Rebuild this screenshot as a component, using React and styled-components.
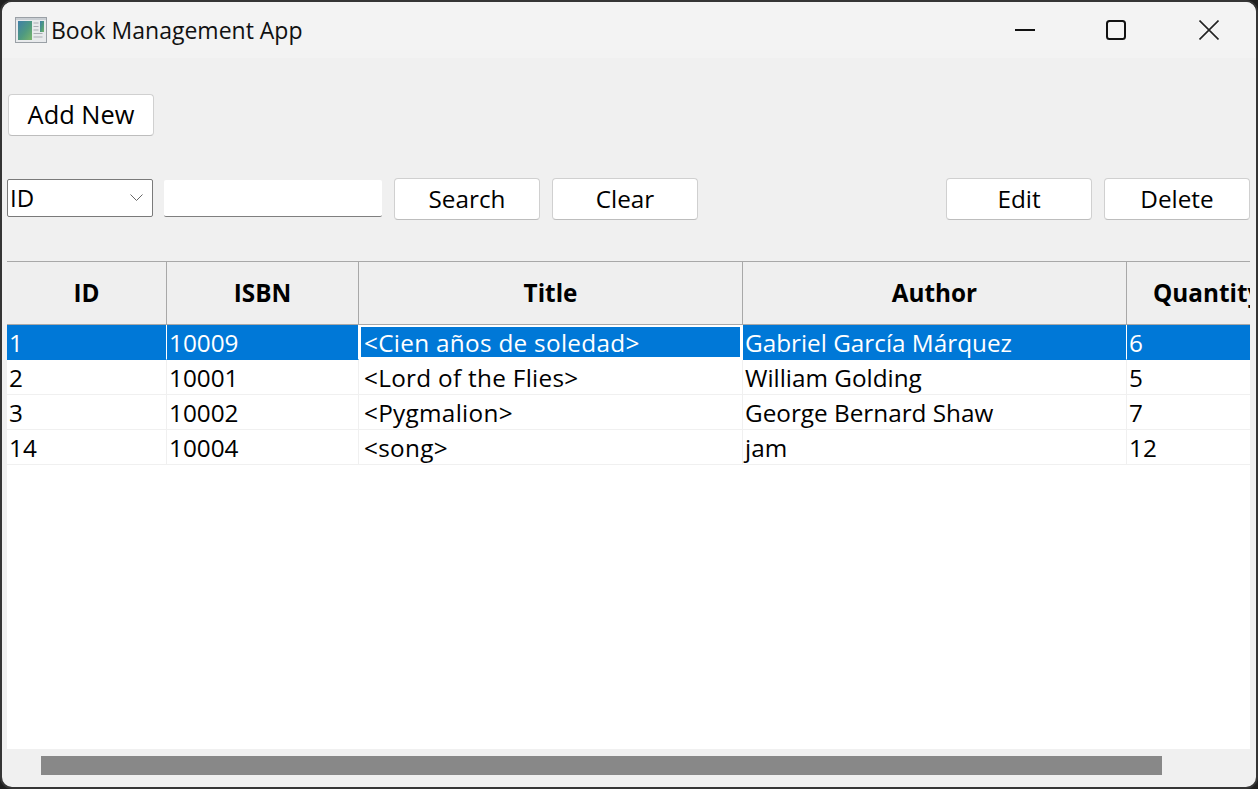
import React from "react";
import styled, { createGlobalStyle } from "styled-components";

const Global = createGlobalStyle`
  html, body { margin: 0; padding: 0; background: #1f1f1f; overflow: hidden; }
  * { box-sizing: border-box; }
`;

const font = `"Open Sans", "Noto Sans", "Liberation Sans", sans-serif`;

const Win = styled.div`
  width: 1258px; height: 789px; background: #f0f0f0; border: solid #353535;
  border-width: 2px 2px 2px 2px; border-radius: 12px; overflow: hidden;
  display: flex; flex-direction: column; font-family: ${font}; color: #000;
`;
const TitleBar = styled.div`
  height: 56px; flex: none; background: #f3f3f3; display: flex; align-items: center;
  padding-left: 13px; padding-bottom: 1px;
`;
const AppTitle = styled.div`
  font-size: 23px; margin-left: 4px; flex: 1; color: #111; padding-top: 1px;
`;
const WinBtn = styled.div`
  width: 92px; height: 56px; display: flex; align-items: center; justify-content: center; flex: none;
  padding-right: ${p => p.$pr || 0}px;
`;
const Controls = styled.div`
  display: flex; margin-right: 1px;
`;
const Body = styled.div`
  flex: 1; display: flex; flex-direction: column; padding: 0 6px 0 5px; min-height: 0;
`;
const TopRow = styled.div`
  display: flex; height: 42px; margin-top: 36px; padding-left: 1px;
`;
const Btn = styled.div`
  width: 146px; height: 42px; background: #fff; border: 1px solid #d0d0d0; border-bottom-color: #bdbdbd;
  border-radius: 4px; display: flex; align-items: center; justify-content: center;
  font-size: ${p => p.$fs || 24.3}px; padding-bottom: ${p => p.$pb || 1}px; flex: none; margin-right: ${p => p.$mr || 0}px;
`;
const SearchRow = styled.div`
  display: flex; height: 42px; margin-top: 42px; align-items: flex-start;
`;
const Combo = styled.div`
  width: 146px; height: 38px; margin-top: 1px; background: #fff; border: 1px solid #7a7a7a; border-radius: 2px;
  display: flex; align-items: center; justify-content: space-between; padding: 0 9px 2px 2px;
  font-size: 24px; flex: none; margin-right: 11px;
`;
const Input = styled.div`
  width: 218px; height: 37px; margin-top: 2px; background: #fff; border-bottom: 1px solid #7f7f7f;
  border-radius: 2px; flex: none; margin-right: 12px;
`;
const Spacer = styled.div`flex: 1;`;
const TableWrap = styled.div`
  margin-top: 41px; flex: 1; min-height: 0; background: #fff; overflow: hidden; display: flex; flex-direction: column;
`;
const Row = styled.div`
  display: grid; grid-template-columns: 160px 192px 384px 384px 220px; width: 1340px; flex: none;
`;
const HeadCell = styled.div`
  height: 64px; background: #efefef; border-top: 1px solid #a8a8a8; border-bottom: 1px solid #a8a8a8;
  border-right: 1px solid #a8a8a8; display: flex; align-items: center; justify-content: center;
  font-size: 24.3px; font-weight: 700; padding-bottom: 1px;
`;
const HeadQty = styled(HeadCell)`
  justify-content: flex-start; padding-left: 26px; border-right: none;
`;
const Cell = styled.div`
  height: 35px; display: flex; align-items: center; white-space: nowrap;
  font-size: 24.3px; padding: 1px 0 0 ${p => (p.$title ? 5 : 2)}px;
  letter-spacing: ${p => (p.$title ? 0.3 : 0)}px;
  background: ${p => (p.$sel ? "#0078d7" : "#fff")};
  color: ${p => (p.$sel ? "#fff" : "#000")};
  border-right: 1px solid ${p => (p.$sel ? "#fff" : "#f0f0f0")};
  border-bottom: 1px solid ${p => (p.$sel ? "#0078d7" : "#f0f0f0")};
`;
const FocusCell = styled(Cell)`
  border: 2px solid #fff; border-right-width: 3px; border-bottom-width: 3px;
  padding: 0 0 0 3px;
`;
const ScrollBar = styled.div`
  height: 38px; flex: none; padding: 7px 0 0 34px;
`;
const Thumb = styled.div`
  width: 1121px; height: 19px; background: #888;
`;

const rows = [
  ["1", "10009", "<Cien años de soledad>", "Gabriel García Márquez", "6"],
  ["2", "10001", "<Lord of the Flies>", "William Golding", "5"],
  ["3", "10002", "<Pygmalion>", "George Bernard Shaw", "7"],
  ["14", "10004", "<song>", "jam", "12"],
];

const AppIcon = () => (
  <svg width="32" height="26" viewBox="0 0 32 26">
    <defs>
      <linearGradient id="g" x1="0" y1="0" x2="1" y2="1">
        <stop offset="0" stopColor="#3f7fa8" />
        <stop offset="0.55" stopColor="#4f9a80" />
        <stop offset="1" stopColor="#7ab56a" />
      </linearGradient>
    </defs>
    <rect x="0.5" y="0.5" width="31" height="25" fill="#e8eaec" stroke="#9aa0a6" />
    <rect x="1" y="1" width="30" height="2" fill="#c9ced3" />
    <rect x="3" y="4" width="14" height="19" fill="url(#g)" />
    <rect x="25" y="4" width="4" height="11" fill="url(#g)" />
    <path d="M18.5 6h5M18.5 9.500h5M18.500 13h5M18.500 16.500h9M18.500 20h9" stroke="#a9adb2" strokeWidth="1" />
  </svg>
);

const Chevron = () => (
  <svg width="13" height="7" viewBox="0 0 13 7">
    <path d="M0.500 0.500l6 6 6-6" fill="none" stroke="#666" strokeWidth="1" />
  </svg>
);

export default function App() {
  return (
    <>
      <Global />
      <Win>
        <TitleBar>
          <AppIcon />
          <AppTitle>Book Management App</AppTitle>
          <Controls>
            <WinBtn>
              <svg width="20" height="20" viewBox="0 0 20 20"><path d="M0 10h20" stroke="#111" strokeWidth="2" /></svg>
            </WinBtn>
            <WinBtn $pr={2}>
              <svg width="20" height="20" viewBox="0 0 20 20"><rect x="1" y="1" width="18" height="18" rx="2.500" fill="none" stroke="#111" strokeWidth="2" /></svg>
            </WinBtn>
            <WinBtn>
              <svg width="20" height="20" viewBox="0 0 20 20"><path d="M0.500 0.500l19 19M19.500 0.500l-19 19" stroke="#222" strokeWidth="1.600" /></svg>
            </WinBtn>
          </Controls>
        </TitleBar>
        <Body>
          <TopRow>
            <Btn $fs={25.4} $pb={3}>Add New</Btn>
          </TopRow>
          <SearchRow>
            <Combo>ID<Chevron /></Combo>
            <Input />
            <Btn $mr={12}>Search</Btn>
            <Btn>Clear</Btn>
            <Spacer />
            <Btn $mr={12}>Edit</Btn>
            <Btn>Delete</Btn>
          </SearchRow>
          <TableWrap>
            <Row>
              <HeadCell>ID</HeadCell>
              <HeadCell>ISBN</HeadCell>
              <HeadCell>Title</HeadCell>
              <HeadCell>Author</HeadCell>
              <HeadQty>Quantity</HeadQty>
            </Row>
            {rows.map((r, i) => (
              <Row key={r[0]}>
                {r.map((c, j) =>
                  i === 0 && j === 2 ? (
                    <FocusCell key={j} $sel $title>{c}</FocusCell>
                  ) : (
                    <Cell key={j} $sel={i === 0} $title={j === 2}>{c}</Cell>
                  )
                )}
              </Row>
            ))}
            <Spacer />
          </TableWrap>
          <ScrollBar><Thumb /></ScrollBar>
        </Body>
      </Win>
    </>
  );
}
